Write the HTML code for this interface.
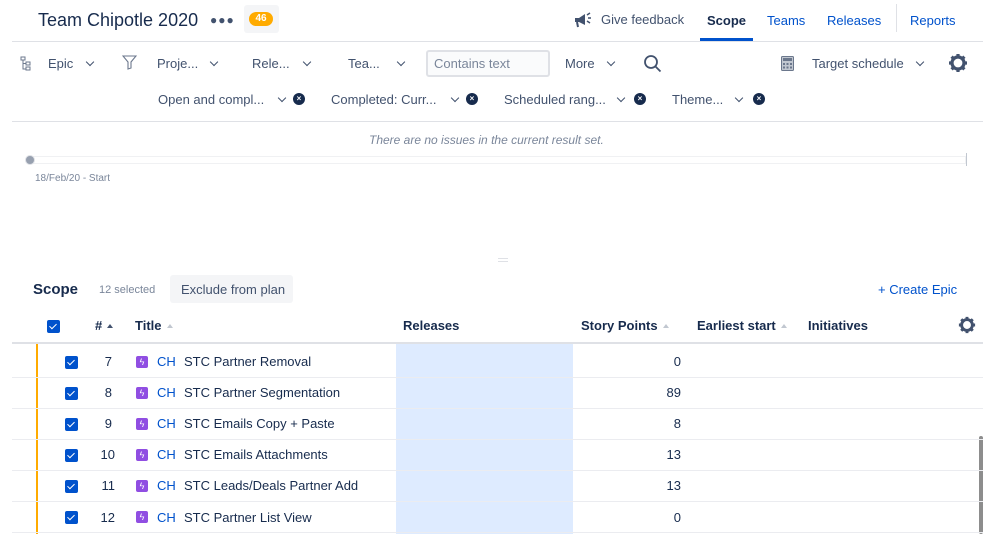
<!DOCTYPE html>
<html><head><meta charset="utf-8"><style>
*{margin:0;padding:0;box-sizing:border-box}
body{width:998px;height:534px;overflow:hidden;background:#fff;font-family:"Liberation Sans",sans-serif;color:#172b4d;position:relative}
.a{position:absolute;white-space:nowrap}
.t{font-size:13px;color:#42526e}
.chev{position:absolute;width:6px;height:6px;border-right:1.6px solid #42526e;border-bottom:1.6px solid #42526e;transform:rotate(45deg)}
.x{position:absolute;width:12px;height:12px;border-radius:50%;background:#172b4d;color:#fff;font-size:8px;line-height:12px;text-align:center;font-weight:bold}
.cb{position:absolute;width:13px;height:13px;border-radius:2px;background:#0052cc}
.cb:after{content:"";position:absolute;left:4px;top:2px;width:3px;height:6px;border-right:1.8px solid #fff;border-bottom:1.8px solid #fff;transform:rotate(45deg)}
.row{position:absolute;left:12px;width:971px;height:1px;background:#ebecf0}
.ic{position:absolute;width:12px;height:12px;border-radius:2px;background:#904ee2;color:#fff;font-size:9px;line-height:12px;text-align:center}
.h{font-size:13px;font-weight:bold;color:#172b4d}
.tri{display:inline-block;width:0;height:0;border-left:3.5px solid transparent;border-right:3.5px solid transparent;border-bottom:4px solid #c1c7d0;margin-left:5px;vertical-align:2px}
</style></head><body>
<div class="a" style="left:38px;top:10px;font-size:18px;color:#172b4d">Team Chipotle 2020</div>
<div class="a" style="left:210px;top:13px;font-size:12px;color:#42526e;letter-spacing:1px">●●●</div>
<div class="a" style="left:244px;top:5px;width:35px;height:28px;background:#f4f5f7;border-radius:3px"></div>
<div class="a" style="left:249px;top:12px;width:24px;height:14px;background:#ffab00;border-radius:7px;color:#fff;font-size:10px;font-weight:bold;text-align:center;line-height:14px">46</div>
<svg class="a" style="left:573px;top:11px" width="20" height="18" viewBox="0 0 20 18"><path d="M2 7h4l6-4v11l-6-3H2z" fill="#42526e"/><path d="M4 11l1 5" stroke="#42526e" stroke-width="2"/><path d="M14 4l3-2M15 7h3M14 10l3 2" stroke="#42526e" stroke-width="1.5"/></svg>
<div class="a" style="left:601px;top:12px;font-size:13px;color:#42526e">Give feedback</div>
<div class="a" style="left:707px;top:13px;font-size:13px;font-weight:bold">Scope</div>
<div class="a" style="left:700px;top:38px;width:53px;height:3px;background:#0052cc"></div>
<div class="a" style="left:767px;top:13px;font-size:13px;color:#0052cc">Teams</div>
<div class="a" style="left:827px;top:13px;font-size:13px;color:#0052cc">Releases</div>
<div class="a" style="left:896px;top:4px;width:1px;height:28px;background:#dfe1e6"></div>
<div class="a" style="left:910px;top:13px;font-size:13px;color:#0052cc">Reports</div>
<div class="a" style="left:12px;top:41px;width:971px;height:1px;background:#dfe1e6"></div>

<svg class="a" style="left:20px;top:56px" width="12" height="15" viewBox="0 0 12 15" fill="none" stroke="#6b778c" stroke-width="1"><rect x="1" y="1" width="4" height="3"/><rect x="6" y="6" width="4" height="3"/><rect x="6" y="11" width="4" height="3"/><path d="M3 4v9h3M3 7.5h3"/></svg>
<div class="a t" style="left:48px;top:56px">Epic</div><div class="chev" style="left:87px;top:59px"></div>
<svg class="a" style="left:122px;top:55px" width="15" height="15" viewBox="0 0 15 15" fill="none" stroke="#6b778c" stroke-width="1.1"><path d="M1 1h13L9 7v6l-3 1V7z"/></svg>
<div class="a t" style="left:157px;top:56px">Proje...</div><div class="chev" style="left:211px;top:59px"></div>
<div class="a t" style="left:252px;top:56px">Rele...</div><div class="chev" style="left:304px;top:59px"></div>
<div class="a t" style="left:348px;top:56px">Tea...</div><div class="chev" style="left:398px;top:59px"></div>
<div class="a" style="left:426px;top:50px;width:124px;height:27px;border:2px solid #dfe1e6;border-radius:3px;background:#fafbfc"></div>
<div class="a" style="left:434px;top:56px;font-size:13px;color:#7a869a">Contains text</div>
<div class="a t" style="left:565px;top:56px">More</div><div class="chev" style="left:608px;top:59px"></div>
<svg class="a" style="left:643px;top:54px" width="19" height="19" viewBox="0 0 19 19" fill="none" stroke="#42526e" stroke-width="1.8"><circle cx="8" cy="8" r="6"/><path d="M12.5 12.5l5 5"/></svg>
<svg class="a" style="left:781px;top:56px" width="13" height="15" viewBox="0 0 13 15"><rect x="0.5" y="0.5" width="12" height="14" rx="1" fill="#c1c7d0" stroke="#6b778c"/><rect x="2" y="2" width="9" height="3" fill="#6b778c"/><g fill="#6b778c"><rect x="2" y="7" width="2" height="2"/><rect x="5.5" y="7" width="2" height="2"/><rect x="9" y="7" width="2" height="2"/><rect x="2" y="10.5" width="2" height="2"/><rect x="5.5" y="10.5" width="2" height="2"/><rect x="9" y="10.5" width="2" height="2"/></g></svg>
<div class="a t" style="left:812px;top:56px">Target schedule</div><div class="chev" style="left:917px;top:59px"></div>
<svg class="a" style="left:948px;top:53px" width="20" height="20" viewBox="0 0 20 20"><circle cx="10" cy="10" r="6" fill="none" stroke="#42526e" stroke-width="3.2"/><g stroke="#42526e" stroke-width="3.2"><path d="M10 1v3M10 16v3M1 10h3M16 10h3M3.6 3.6l2.1 2.1M14.3 14.3l2.1 2.1M3.6 16.4l2.1-2.1M14.3 5.7l2.1-2.1"/></g></svg>

<div class="a t" style="left:158px;top:92px">Open and compl...</div><div class="chev" style="left:279px;top:95px"></div><div class="x" style="left:293px;top:93px">×</div>
<div class="a t" style="left:331px;top:92px">Completed: Curr...</div><div class="chev" style="left:452px;top:95px"></div><div class="x" style="left:466px;top:93px">×</div>
<div class="a t" style="left:504px;top:92px">Scheduled rang...</div><div class="chev" style="left:618px;top:95px"></div><div class="x" style="left:634px;top:93px">×</div>
<div class="a t" style="left:672px;top:92px">Theme...</div><div class="chev" style="left:736px;top:95px"></div><div class="x" style="left:753px;top:93px">×</div>
<div class="a" style="left:12px;top:121px;width:971px;height:1px;background:#dfe1e6"></div>

<div class="a" style="left:369px;top:133px;font-size:12px;font-style:italic;color:#7a869a">There are no issues in the current result set.</div>
<div class="a" style="left:28px;top:156px;width:938px;height:8px;border:1px solid #f0f1f3"></div>
<div class="a" style="left:25px;top:155px;width:10px;height:10px;border-radius:50%;background:#97a0af;border:1px solid #dfe1e6"></div>
<div class="a" style="left:966px;top:153px;width:1px;height:13px;background:#c1c7d0"></div>
<div class="a" style="left:35px;top:173px;font-size:10px;color:#7a869a">18/Feb/20 - Start</div>
<div class="a" style="left:498px;top:258px;width:10px;height:4px;border-top:1px solid #dfe1e6;border-bottom:1px solid #dfe1e6"></div>

<div class="a" style="left:33px;top:281px;font-size:15px;font-weight:bold">Scope</div>
<div class="a" style="left:99px;top:284px;font-size:11px;color:#7a869a">12 selected</div>
<div class="a" style="left:170px;top:275px;width:123px;height:28px;background:#f4f5f7;border-radius:3px"></div>
<div class="a" style="left:181px;top:282px;font-size:13px;color:#42526e">Exclude from plan</div>
<div class="a" style="left:878px;top:282px;font-size:13px;color:#0052cc">+ Create Epic</div>

<div class="cb" style="left:47px;top:320px"></div>
<div class="a h" style="left:95px;top:318px">#<span class="tri" style="border-bottom-color:#42526e"></span></div>
<div class="a h" style="left:135px;top:318px">Title<span class="tri"></span></div>
<div class="a h" style="left:403px;top:318px">Releases</div>
<div class="a h" style="left:581px;top:318px">Story Points<span class="tri"></span></div>
<div class="a h" style="left:697px;top:318px">Earliest start<span class="tri"></span></div>
<div class="a h" style="left:808px;top:318px">Initiatives</div>
<svg class="a" style="left:958px;top:316px" width="18" height="18" viewBox="0 0 20 20"><circle cx="10" cy="10" r="6" fill="none" stroke="#42526e" stroke-width="3.2"/><g stroke="#42526e" stroke-width="3.2"><path d="M10 1v3M10 16v3M1 10h3M16 10h3M3.6 3.6l2.1 2.1M14.3 14.3l2.1 2.1M3.6 16.4l2.1-2.1M14.3 5.7l2.1-2.1"/></g></svg>
<div class="a" style="left:12px;top:342px;width:971px;height:2px;background:#dfe1e6"></div>
<div class="a" style="left:396px;top:344px;width:177px;height:190px;background:#deebff"></div>
<div class="a" style="left:36px;top:344px;width:2px;height:190px;background:#ffab00"></div>
<div class="a" style="left:979px;top:436px;width:4px;height:98px;background:#8d8d8d;border-radius:2px"></div>

<div class="row" style="top:377px"></div><div class="row" style="top:408px"></div><div class="row" style="top:439px"></div><div class="row" style="top:470px"></div><div class="row" style="top:501px"></div><div class="row" style="top:532px"></div>

<div class="cb" style="left:65px;top:356px"></div><div class="a" style="left:100px;top:354px;width:12px;text-align:right;font-size:13px">7</div><div class="ic" style="left:136px;top:356px">ϟ</div><div class="a" style="left:157px;top:354px;font-size:13px;color:#0052cc">CH</div><div class="a" style="left:184px;top:354px;font-size:13px">STC Partner Removal</div><div class="a" style="left:600px;top:354px;width:81px;text-align:right;font-size:13px">0</div>
<div class="cb" style="left:65px;top:387px"></div><div class="a" style="left:100px;top:385px;width:12px;text-align:right;font-size:13px">8</div><div class="ic" style="left:136px;top:387px">ϟ</div><div class="a" style="left:157px;top:385px;font-size:13px;color:#0052cc">CH</div><div class="a" style="left:184px;top:385px;font-size:13px">STC Partner Segmentation</div><div class="a" style="left:600px;top:385px;width:81px;text-align:right;font-size:13px">89</div>
<div class="cb" style="left:65px;top:418px"></div><div class="a" style="left:100px;top:416px;width:12px;text-align:right;font-size:13px">9</div><div class="ic" style="left:136px;top:418px">ϟ</div><div class="a" style="left:157px;top:416px;font-size:13px;color:#0052cc">CH</div><div class="a" style="left:184px;top:416px;font-size:13px">STC Emails Copy + Paste</div><div class="a" style="left:600px;top:416px;width:81px;text-align:right;font-size:13px">8</div>
<div class="cb" style="left:65px;top:449px"></div><div class="a" style="left:95px;top:447px;width:20px;text-align:right;font-size:13px">10</div><div class="ic" style="left:136px;top:449px">ϟ</div><div class="a" style="left:157px;top:447px;font-size:13px;color:#0052cc">CH</div><div class="a" style="left:184px;top:447px;font-size:13px">STC Emails Attachments</div><div class="a" style="left:600px;top:447px;width:81px;text-align:right;font-size:13px">13</div>
<div class="cb" style="left:65px;top:480px"></div><div class="a" style="left:95px;top:478px;width:20px;text-align:right;font-size:13px">11</div><div class="ic" style="left:136px;top:480px">ϟ</div><div class="a" style="left:157px;top:478px;font-size:13px;color:#0052cc">CH</div><div class="a" style="left:184px;top:478px;font-size:13px">STC Leads/Deals Partner Add</div><div class="a" style="left:600px;top:478px;width:81px;text-align:right;font-size:13px">13</div>
<div class="cb" style="left:65px;top:511px"></div><div class="a" style="left:95px;top:510px;width:20px;text-align:right;font-size:13px">12</div><div class="ic" style="left:136px;top:511px">ϟ</div><div class="a" style="left:157px;top:510px;font-size:13px;color:#0052cc">CH</div><div class="a" style="left:184px;top:510px;font-size:13px">STC Partner List View</div><div class="a" style="left:600px;top:510px;width:81px;text-align:right;font-size:13px">0</div>
</body></html>
